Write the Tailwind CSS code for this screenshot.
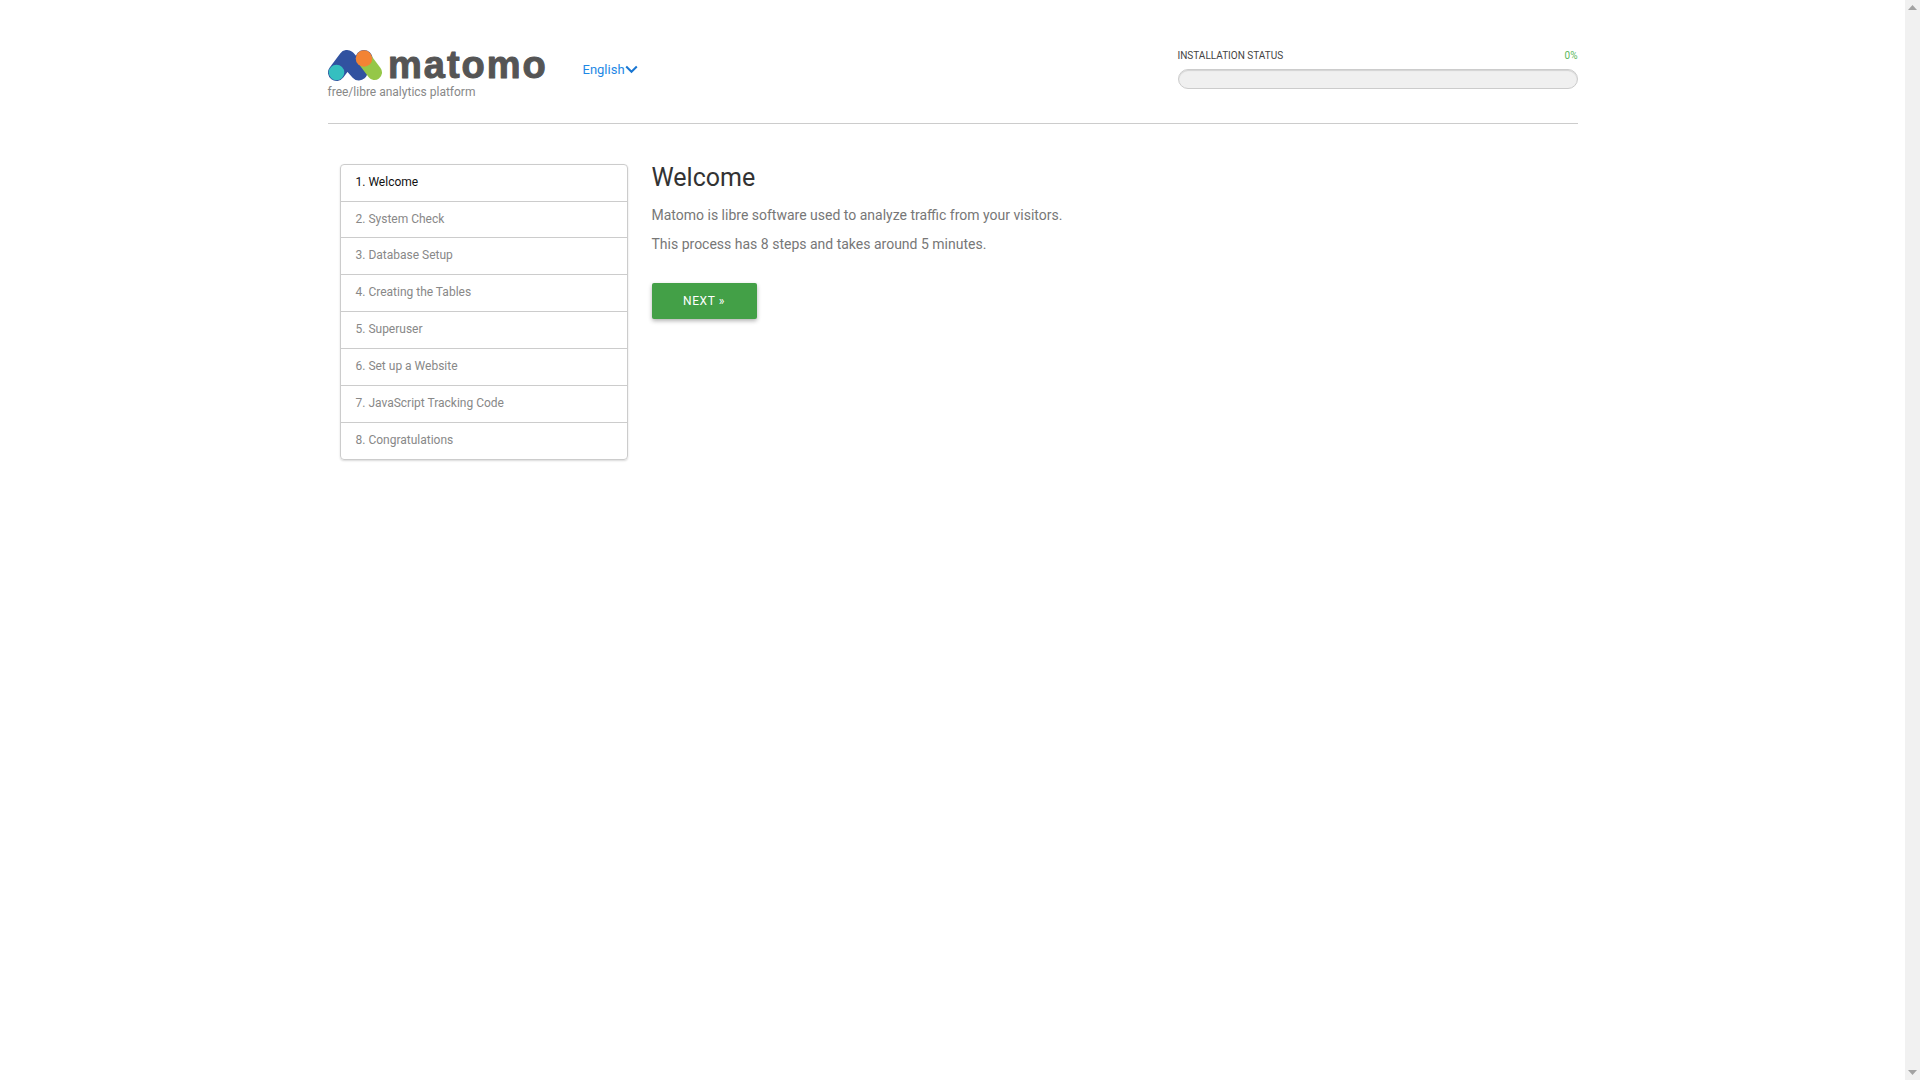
<!DOCTYPE html>
<html lang="en">
<head>
<meta charset="utf-8">
<title>Matomo</title>
<script src="https://cdn.jsdelivr.net/npm/@tailwindcss/browser@4"></script>
</head>
<body class="h-screen overflow-hidden bg-white font-['Roboto',sans-serif] text-[#777]">
<div class="flex h-[1080px]">
  <div class="flex-1 min-w-0">
    <div class="w-[1250px] mx-auto">
      <header class="h-[124px] border-b border-[#ccc] flex items-start">
        <div class="w-[255px] pt-[48px]">
          <div class="flex items-start h-[34px]">
            <svg class="block shrink-0" width="60" height="34" viewBox="0 0 60 34">
              <path d="M8.5 24.5 L19 10.5 L31 24 L36 10.5" fill="none" stroke="#3152a0" stroke-width="17" stroke-linecap="round" stroke-linejoin="round"/>
              <path d="M36 10.5 L46.5 24.5" fill="none" stroke="#95c748" stroke-width="15" stroke-linecap="round"/>
              <circle cx="8.5" cy="24.5" r="7.8" fill="#35bfc0"/>
              <circle cx="36" cy="10.5" r="8.3" fill="#f38334"/>
            </svg>
            <svg class="block shrink-0 overflow-visible" width="165" height="40" viewBox="0 0 165 40">
              <text x="0" y="30" font-family="Liberation Sans" font-weight="700" font-size="38" letter-spacing="2" fill="#555" stroke="#555" stroke-width="1" stroke-linejoin="round">matomo</text>
            </svg>
          </div>
          <div class="text-xs leading-[16px] mt-[2px] text-[#888]">free/libre analytics platform</div>
        </div>
        <div class="pt-[62px] flex items-center text-[13px] leading-[15px] text-[#1e88e5]">
          <span>English</span>
          <svg class="block" width="13" height="9" viewBox="0 0 13 9"><path d="M1.2 1.5 L6.5 6.8 L11.8 1.5" fill="none" stroke="#1976d2" stroke-width="2"/></svg>
        </div>
        <div class="ml-auto w-[400px] pt-[50px]">
          <div class="flex justify-between text-[10px] leading-[12px] uppercase text-[#444]">
            <span>Installation status</span><span class="text-[#5cb85c]">0%</span>
          </div>
          <div class="mt-[7px] h-[20px] rounded-full bg-[#f0f0f0] border border-[#ccc] shadow-[inset_0_1px_1px_rgba(0,0,0,0.12)]"></div>
        </div>
      </header>
      <div class="flex pt-[40px]">
        <ul class="ml-[12px] w-[288px] h-[296px] flex flex-col border border-[#ccc] rounded-[4px] shadow-[0_1px_2px_rgba(0,0,0,0.15)] text-xs">
          <li class="h-[37px] pl-[15px] pt-[10px] border-b border-[#ccc] text-[#111] leading-[14px]">1. Welcome</li>
          <li class="h-[36px] pl-[15px] pt-[10px] border-b border-[#ccc] text-[#888] leading-[14px]">2. System Check</li>
          <li class="h-[37px] pl-[15px] pt-[10px] border-b border-[#ccc] text-[#888] leading-[14px]">3. Database Setup</li>
          <li class="h-[37px] pl-[15px] pt-[10px] border-b border-[#ccc] text-[#888] leading-[14px]">4. Creating the Tables</li>
          <li class="h-[37px] pl-[15px] pt-[10px] border-b border-[#ccc] text-[#888] leading-[14px]">5. Superuser</li>
          <li class="h-[37px] pl-[15px] pt-[10px] border-b border-[#ccc] text-[#888] leading-[14px]">6. Set up a Website</li>
          <li class="h-[37px] pl-[15px] pt-[10px] border-b border-[#ccc] text-[#888] leading-[14px]">7. JavaScript Tracking Code</li>
          <li class="h-[36px] pl-[15px] pt-[10px] text-[#888] leading-[14px]">8. Congratulations</li>
        </ul>
        <main class="ml-[24px]">
          <h2 class="text-[25px] leading-[30px] -mt-[1px] font-normal text-[#333]">Welcome</h2>
          <p class="mt-[12px] text-sm leading-[20px] text-[#777]">Matomo is libre software used to analyze traffic from your visitors.</p>
          <p class="mt-[9px] text-sm leading-[20px] text-[#777]">This process has 8 steps and takes around 5 minutes.</p>
          <button class="mt-[29px] block w-[105px] h-[36px] rounded-[2px] bg-[#43a047] text-white text-xs uppercase tracking-[0.6px] shadow-[0_2px_4px_rgba(0,0,0,0.3)]">Next »</button>
        </main>
      </div>
    </div>
  </div>
  <div class="w-[15px] shrink-0 bg-[#f1f1f1] flex flex-col justify-between items-center py-[5px]">
    <svg class="block" width="9" height="5" viewBox="0 0 9 5"><path d="M4.5 0 L9 5 H0 Z" fill="#a3a3a3"/></svg>
    <svg class="block" width="9" height="5" viewBox="0 0 9 5"><path d="M0 0 H9 L4.5 5 Z" fill="#a3a3a3"/></svg>
  </div>
</div>
</body>
</html>
